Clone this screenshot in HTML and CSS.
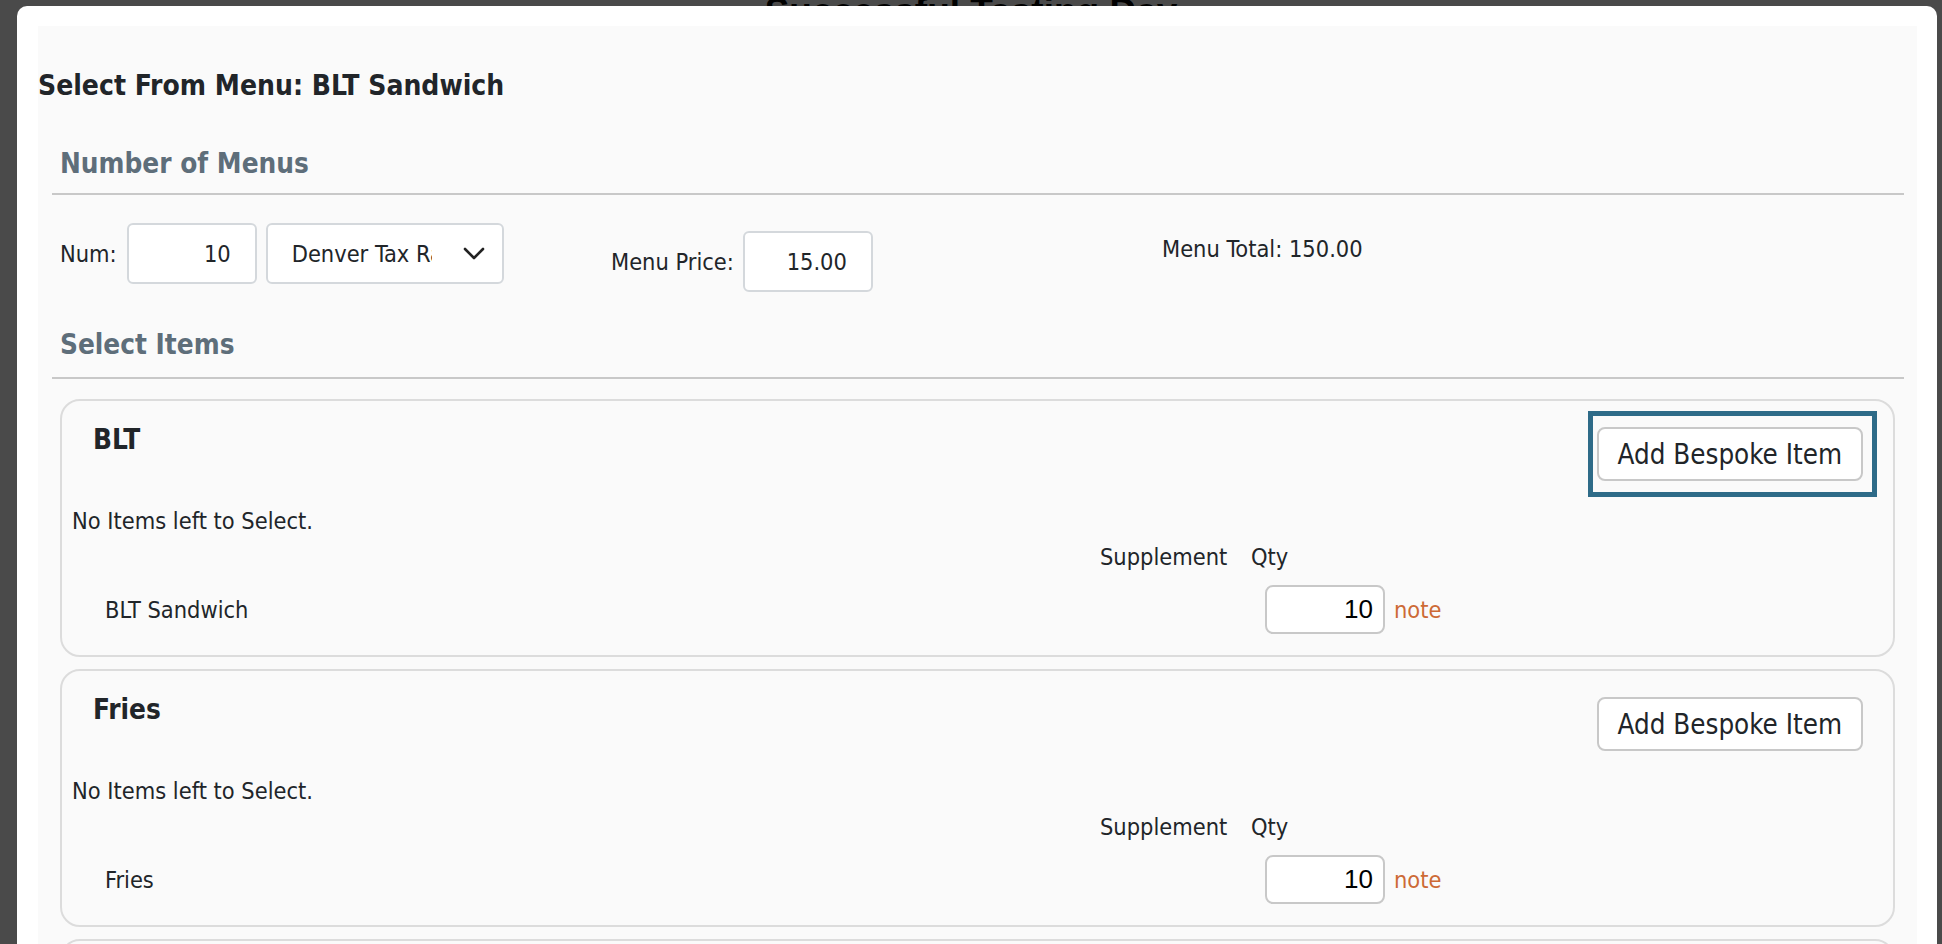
FILE: index.html
```html
<!doctype html>
<html lang="en">
<head>
    <meta charset="UTF-8">
    <title>Tasting Day - Select From Menu</title>
    <link rel="stylesheet" href="styles.css">
</head>
<body>
    <div class="page">
        <h1 class="page-title">Successful Tasting Day</h1>
    </div>

    <div class="overlay"></div>

    <div class="modal">
        <div class="modal-body">
            <h3 class="modal-title">Select From Menu: BLT Sandwich</h3>

            <h4 class="section-title">Number of Menus</h4>
            <div class="menu-row">
                <div class="field">
                    <label for="num">Num:</label>
                    <input type="text" id="num" class="num-input" value="10">
                    <div class="select-box">
                        <span class="select-text">Denver Tax Rate</span>
                        <svg class="chevron" width="22" height="13" viewBox="0 0 22 13">
                            <path d="M2 2 L11 11 L20 2" fill="none" stroke="#222" stroke-width="2.6" stroke-linecap="round" stroke-linejoin="round"/>
                        </svg>
                    </div>
                </div>
                <div class="field field-price">
                    <label for="price">Menu Price:</label>
                    <input type="text" id="price" class="num-input" value="15.00">
                </div>
                <div class="menu-total">Menu Total: 150.00</div>
            </div>

            <h4 class="section-title section-items">Select Items</h4>

            <div class="course">
                <div class="course-head">
                    <h5 class="course-name">BLT</h5>
                    <span class="focus-ring"><button class="bespoke">Add Bespoke Item</button></span>
                </div>
                <p class="empty-note">No Items left to Select.</p>
                <div class="item-grid">
                    <span></span>
                    <span>Supplement</span>
                    <span>Qty</span>
                </div>
                <div class="item-grid item-row">
                    <span>BLT Sandwich</span>
                    <span></span>
                    <span class="qty-cell">
                        <input type="text" class="qty-input" value="10">
                        <a class="note" href="#">note</a>
                    </span>
                </div>
            </div>

            <div class="course">
                <div class="course-head">
                    <h5 class="course-name">Fries</h5>
                    <button class="bespoke">Add Bespoke Item</button>
                </div>
                <p class="empty-note">No Items left to Select.</p>
                <div class="item-grid">
                    <span></span>
                    <span>Supplement</span>
                    <span>Qty</span>
                </div>
                <div class="item-grid item-row">
                    <span>Fries</span>
                    <span></span>
                    <span class="qty-cell">
                        <input type="text" class="qty-input" value="10">
                        <a class="note" href="#">note</a>
                    </span>
                </div>
            </div>

            <div class="course">
                <div class="course-head">
                    <h5 class="course-name">Dessert</h5>
                    <button class="bespoke">Add Bespoke Item</button>
                </div>
            </div>
        </div>
    </div>
</body>
</html>
```

FILE: styles.css
```css
body {
    margin: 0;
    height: 944px;
    overflow: hidden;
    background-color: #fff;
    color: #212529;
    font-family: "DejaVu Sans Condensed", "DejaVu Sans", sans-serif;
    font-size: 23.4px;
    line-height: 28px;
}

.page-title {
    margin: -9px 0 0;
    text-align: center;
    font: bold 37px/42px "Liberation Sans", Arial, sans-serif;
    color: #000;
}

.overlay {
    position: fixed;
    inset: 0;
    background-color: rgba(0, 0, 0, 0.71);
}

.modal {
    position: fixed;
    left: 17px;
    top: 6px;
    right: 5px;
    bottom: -300px;
    padding: 20px 20px 0 21px;
    background-color: #fff;
    border-radius: 10px;
}

.modal-body {
    height: 100%;
    padding-top: 43px;
    box-sizing: border-box;
    background-color: #fafafa;
}

.modal-title {
    margin: 0;
    font-size: 28px;
    line-height: 33px;
    font-weight: bold;
}

.section-title {
    margin: 45px 13px 0 14px;
    padding: 0 0 13px 8px;
    border-bottom: 2px solid #c8c8c8;
    color: #5e6e7a;
    font-size: 27.7px;
    line-height: 33px;
    font-weight: bold;
}

.section-items {
    margin-top: 0;
    margin-bottom: 20px;
    padding-bottom: 16px;
}

.menu-row {
    display: grid;
    grid-template-columns: 551px 551px 1fr;
    align-items: start;
    margin: 28px 13px 36px 22px;
}

.field {
    display: flex;
    align-items: center;
}

.field label {
    margin-right: 10px;
}

.field-price {
    margin-top: 8px;
}

.field-price label {
    margin-right: 9px;
}

.menu-total {
    margin-top: 12px;
}

.num-input {
    width: 130px;
    height: 61px;
    box-sizing: border-box;
    padding: 0 24px 0 10px;
    border: 2px solid #d4d8dc;
    border-radius: 6px;
    background-color: #fff;
    color: #212529;
    font-family: inherit;
    font-size: 23.4px;
    text-align: right;
}

.select-box {
    display: flex;
    align-items: center;
    width: 238px;
    height: 61px;
    box-sizing: border-box;
    margin-left: 9px;
    padding-left: 24px;
    border: 2px solid #d4d8dc;
    border-radius: 6px;
    background-color: #fff;
}

.select-text {
    flex: none;
    width: 140px;
    overflow: hidden;
    white-space: nowrap;
}

.chevron {
    margin-left: 31px;
}

.course {
    margin: 0 22px 12px 22px;
    border: 2px solid #dcdcdc;
    border-radius: 20px;
    padding-bottom: 21px;
}

.course-head {
    display: flex;
    justify-content: space-between;
    align-items: flex-start;
    padding: 22px 30px 0 31px;
}

.course-name {
    margin: 0;
    font-size: 27.7px;
    line-height: 33px;
    font-weight: bold;
}

.bespoke {
    display: block;
    height: 54px;
    margin-top: 4px;
    padding: 0 19px;
    border: 2px solid #c8c8c8;
    border-radius: 8px;
    background-color: #fff;
    color: #212529;
    font-family: inherit;
    font-size: 27.5px;
}

.focus-ring {
    display: block;
    margin: -7px -9px -11px 0;
    padding: 11px 9px 11px 4px;
    outline: 5px solid #2e6b88;
}

.focus-ring .bespoke {
    margin-top: 0;
}

.empty-note {
    margin: 26px 0 0 10px;
}

.item-grid {
    display: grid;
    grid-template-columns: 995px 151px 250px;
    margin-top: 8px;
    padding-left: 43px;
}

.item-row {
    align-items: center;
    margin-top: 14px;
}

.qty-cell {
    display: flex;
    align-items: center;
}

.qty-input {
    width: 120px;
    height: 49px;
    box-sizing: border-box;
    margin-left: 14px;
    padding: 0 10px 0 6px;
    border: 2px solid #c8c8c8;
    border-radius: 8px;
    background-color: #fff;
    color: #000;
    font-family: "Liberation Sans", Arial, sans-serif;
    font-size: 26px;
    text-align: right;
}

.note {
    margin-left: 9px;
    color: #cd6a36;
    text-decoration: none;
}
```
